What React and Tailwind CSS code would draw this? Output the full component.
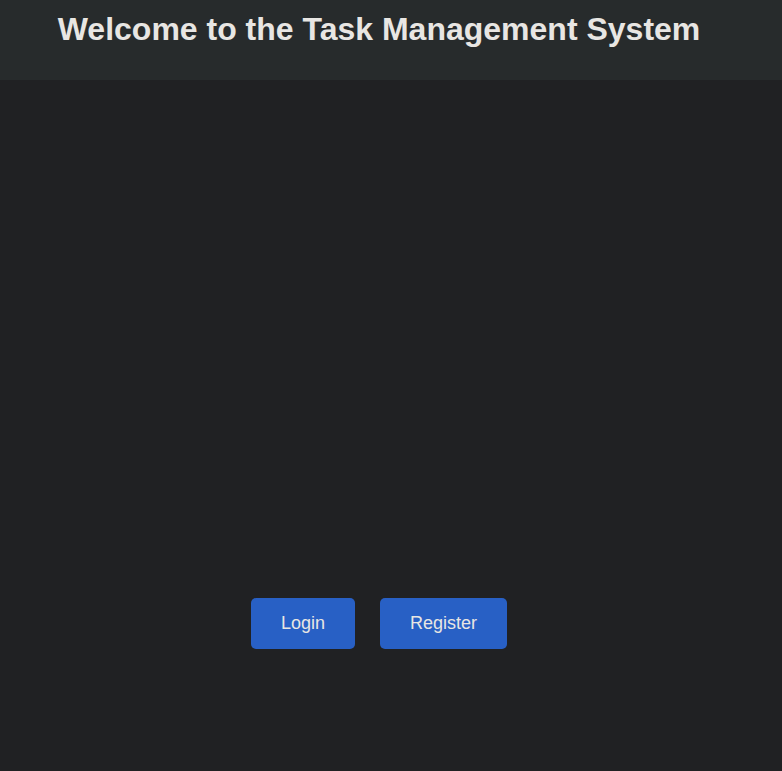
const buttonClass =
  "cursor-pointer rounded-[5px] bg-[#2860c5] px-[30px] py-[15px] text-lg leading-[21px] text-[#e8e6e3] hover:bg-[#1f4fa6]";

export default function App() {
  return (
    <div className="flex min-h-screen flex-col bg-[#202123] font-['Liberation_Sans',Arial,sans-serif] text-[#e8e6e3]">
      <header className="h-20 bg-[#272b2c] pt-2 pr-6 text-center">
        <h1 className="text-[32px] leading-[42px] font-bold">
          Welcome to the Task Management System
        </h1>
      </header>
      <main className="flex grow items-end justify-center gap-[25px] pr-6 pb-[122px]">
        <button type="button" className={buttonClass}>
          Login
        </button>
        <button type="button" className={buttonClass}>
          Register
        </button>
      </main>
    </div>
  );
}
